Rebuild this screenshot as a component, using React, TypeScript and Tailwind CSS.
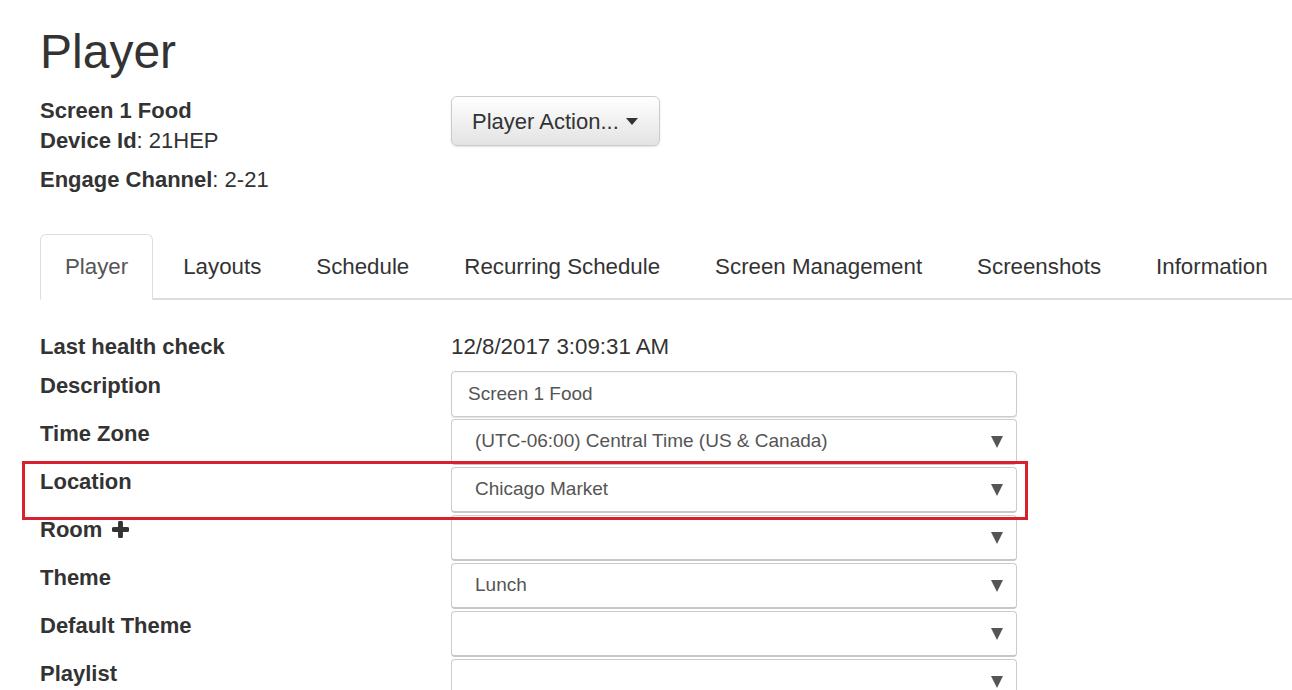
import { Fragment } from 'react';

const font = { fontFamily: '"Liberation Sans", Arial, Helvetica, sans-serif' };

const tabs = ['Player', 'Layouts', 'Schedule', 'Recurring Schedule', 'Screen Management', 'Screenshots', 'Information'];

type Field = {
  label: string;
  kind: 'text' | 'input' | 'select';
  value?: string;
  addButton?: boolean;
};

const fields: Field[] = [
  { label: 'Description', kind: 'input', value: 'Screen 1 Food' },
  { label: 'Time Zone', kind: 'select', value: '(UTC-06:00) Central Time (US & Canada)' },
  { label: 'Location', kind: 'select', value: 'Chicago Market' },
  { label: 'Room', kind: 'select', value: '', addButton: true },
  { label: 'Theme', kind: 'select', value: 'Lunch' },
  { label: 'Default Theme', kind: 'select', value: '' },
  { label: 'Playlist', kind: 'select', value: '' },
];

const Caret = () => (
  <svg width="12" height="13" viewBox="0 0 12 13" className="shrink-0">
    <path d="M0 1 H12 L6 13 Z" fill="#555" />
  </svg>
);

const PlusIcon = () => (
  <svg width="17" height="17" viewBox="0 0 16 16" className="ml-[10px] inline-block align-[-1px]">
    <path d="M8 1.8 V14.2 M1.8 8 H14.2" stroke="#333" strokeWidth="4.6" strokeLinecap="round" />
  </svg>
);

const FieldControl = ({ field }: { field: Field }) => {
  if (field.kind === 'input') {
    return (
      <div className="h-[46px] flex items-center px-[16px] bg-white border border-[#ccc] rounded-[4px] shadow-[inset_0_1px_1px_rgba(0,0,0,0.04),0_1px_1px_rgba(0,0,0,0.12)] text-[19px] text-[#555]">
        {field.value}
      </div>
    );
  }
  return (
    <div className="h-[46px] flex items-center justify-between pl-[23px] pr-[13px] bg-white border border-[#ccc] border-b-[2px] border-b-[#c8c8c8] rounded-[4px] text-[19px] text-[#555]">
      <span>{field.value}</span>
      <Caret />
    </div>
  );
};

export default function App() {
  return (
    <div style={font} className="min-h-[690px] bg-white text-[#333] pl-[40px] pt-[25px] overflow-hidden">
      <h1 className="text-[48px] leading-[53px] font-normal">Player</h1>

      {/* player summary + actions */}
      <div className="mt-[18px] grid grid-cols-[411px_1fr]">
        <div className="text-[22px]">
          <div className="leading-[30px] font-bold">Screen 1 Food</div>
          <div className="leading-[30px]">
            <span className="font-bold">Device Id</span>: 21HEP
          </div>
          <div className="leading-[30px] mt-[9px]">
            <span className="font-bold">Engage Channel</span>: 2-21
          </div>
        </div>
        <div>
          <button className="h-[50px] w-[209px] flex items-center gap-[7px] pl-[20px] rounded-[6px] border border-[#ccc] bg-gradient-to-b from-white to-[#e3e3e3] shadow-[0_1px_2px_rgba(0,0,0,0.12)] text-[22px] text-[#333]">
            Player Action...
            <svg width="12" height="7" viewBox="0 0 12 7">
              <path d="M0 0 H12 L6 7 Z" fill="#333" />
            </svg>
          </button>
        </div>
      </div>

      {/* tabs */}
      <ul className="mt-[39px] flex border-b-[2px] border-[#ddd] whitespace-nowrap">
        {tabs.map((t, i) => (
          <li
            key={t}
            className={
              i === 0
                ? 'mb-[-2px] mr-[5px] pt-[16px] pb-[17px] px-[24px] text-[22.3px] leading-[31px] text-[#555] bg-white border border-[#ddd] border-b-white rounded-t-[6px]'
                : 'mr-[5px] pt-[17px] pb-[15px] px-[25px] text-[22.3px] leading-[31px] text-[#333]'
            }
          >
            {t}
          </li>
        ))}
      </ul>

      {/* player fields */}
      <div className="relative mt-[32px] grid grid-cols-[411px_566px] gap-y-[2px]">
        <div className="text-[22px] leading-[30px] font-bold h-[37px]">Last health check</div>
        <div className="text-[22.3px] leading-[30px] h-[37px]">12/8/2017 3:09:31 AM</div>
        {fields.map((f) => (
          <Fragment key={f.label}>
            <div className="text-[22px] leading-[30px] font-bold">
              {f.label}
              {f.addButton && <PlusIcon />}
            </div>
            <FieldControl field={f} />
          </Fragment>
        ))}

        {/* highlight frame around Location */}
        <div className="absolute left-[-18px] top-[129px] w-[1006px] h-[59px] border-[3px] border-solid border-[#d7212c] pointer-events-none" />
      </div>
    </div>
  );
}
